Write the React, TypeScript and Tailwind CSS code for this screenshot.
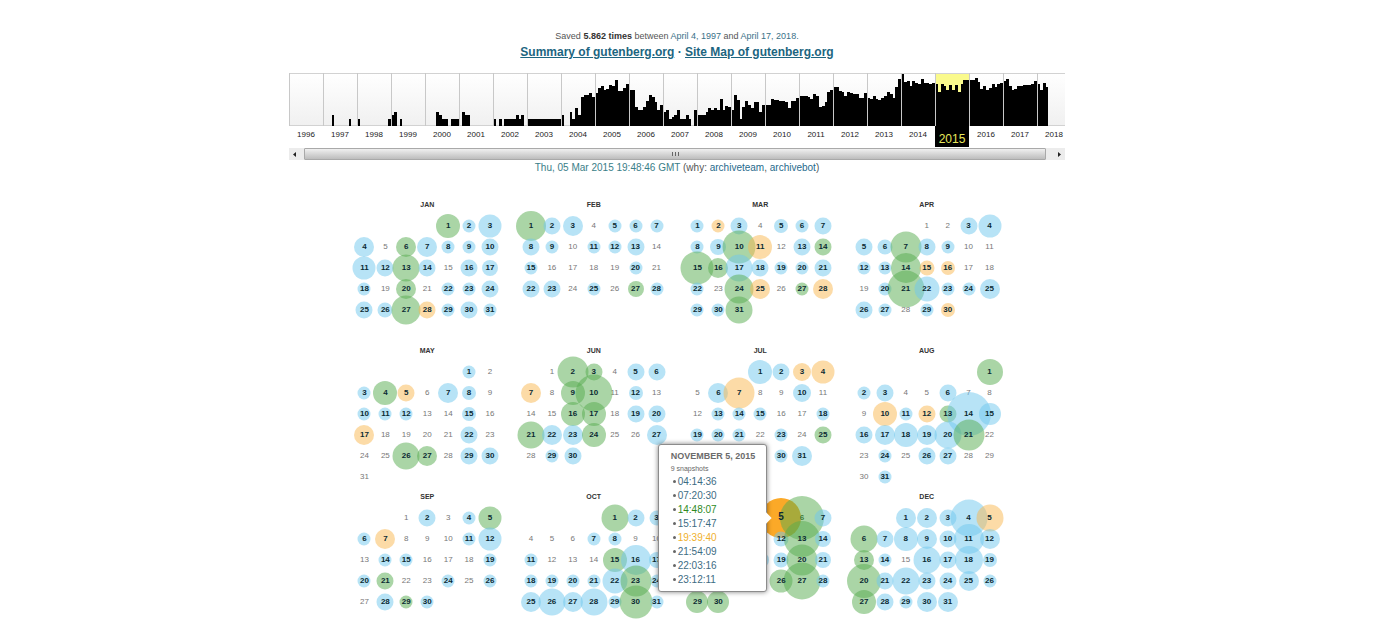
import React from "react";
import clsx from "clsx";

type Tone = "b" | "g" | "o";

interface MonthData {
  name: string;
  offset: number;
  length: number;
  // day, tone, diameter
  marks: string;
  // days that sit fully behind the open popup
  covered?: number[];
}

const FIRST_YEAR = 1996;
const SELECTED_YEAR = 2015;
const YEAR_WIDTH = 34;
const CHART_HEIGHT = 53;

// Monthly capture volume, one row per year
const VOLUME: number[][] = [
  [],
  [0, 0, 0, 11, 0, 0, 0, 0, 0, 7, 0, 0],
  [7, 0, 0, 0, 0, 0, 0, 0, 0, 0, 0, 7],
  [11, 14, 0, 7, 0, 0, 0, 0, 0, 0, 0, 0],
  [0, 0, 0, 0, 14, 11, 7, 7, 0, 7, 7, 7],
  [0, 14, 11, 11, 0, 0, 0, 0, 0, 0, 0, 0],
  [7, 0, 7, 0, 7, 7, 7, 7, 11, 7, 11, 0],
  [7, 7, 7, 7, 7, 7, 7, 7, 7, 7, 7, 7],
  [11, 0, 0, 14, 7, 18, 11, 29, 31, 31, 33, 29],
  [33, 38, 40, 36, 37, 41, 40, 46, 35, 35, 38, 42],
  [36, 36, 19, 16, 16, 19, 25, 31, 29, 24, 16, 21],
  [14, 16, 7, 9, 11, 16, 7, 7, 11, 7, 0, 16],
  [11, 11, 11, 14, 18, 16, 18, 16, 27, 16, 20, 19],
  [16, 31, 26, 7, 19, 25, 21, 18, 24, 24, 14, 21],
  [21, 21, 27, 26, 26, 25, 25, 24, 18, 25, 25, 28],
  [30, 30, 30, 29, 27, 32, 30, 19, 20, 24, 34, 36],
  [39, 39, 35, 34, 30, 34, 33, 32, 32, 28, 28, 33],
  [28, 27, 30, 27, 26, 28, 30, 34, 32, 28, 39, 47],
  [52, 44, 45, 40, 45, 43, 42, 47, 43, 43, 42, 43],
  [42, 34, 42, 40, 36, 41, 36, 41, 34, 42, 46, 46],
  [46, 46, 48, 44, 37, 40, 36, 38, 42, 39, 42, 43],
  [45, 47, 40, 36, 37, 40, 40, 41, 41, 41, 42, 45],
  [42, 36, 43, 39],
];

const MONTHS: MonthData[] = [
  {
    name: "JAN",
    offset: 4,
    length: 31,
    marks:
      "1g24 2b13 3b23 4b20 6g20 7b20 8b13 9b13 10b17 11b23 12b17 13g27 14b17 16b17 17b16 18b13 20g20 22b13 23b13 24b17 25b17 26b15 27g29 28o17 29b13 30b17 31b13",
  },
  {
    name: "FEB",
    offset: 0,
    length: 28,
    marks:
      "1g30 2b17 3b20 5b13 6b13 7b13 8b17 9b13 11b13 12b13 13b17 15b13 20b13 22b17 23b17 25b13 27g16 28b13",
  },
  {
    name: "MAR",
    offset: 0,
    length: 31,
    marks:
      "1b13 2o13 3b17 5b14 6b13 7b17 8b13 9b16 10g33 11o24 13b17 14g17 15g33 16g20 17b27 18b17 19b13 20b13 21b17 22b13 24g29 25o20 27g13 28o20 29b13 30b13 31g27",
  },
  {
    name: "APR",
    offset: 3,
    length: 30,
    marks:
      "3b17 4b23 5b17 6b15 7g31 8b17 9b13 12b13 13b13 14g30 15o15 16o14 20b13 21g37 22b25 23b13 24b13 25b20 26b17 27b13 29b13 30o14",
  },
  {
    name: "MAY",
    offset: 5,
    length: 31,
    marks:
      "1b13 3b13 4g24 5o17 7b20 8b14 10b13 11b13 12b13 15b14 17o20 22b17 26g27 27g20 29b17 30b17",
  },
  {
    name: "JUN",
    offset: 1,
    length: 30,
    marks:
      "2g31 3g17 5b17 6b17 7o20 9g24 10g37 12b14 16g24 17g24 19b17 20b17 21g27 22b20 23b20 24g24 27b20 29b13 30b17",
  },
  {
    name: "JUL",
    offset: 3,
    length: 31,
    marks:
      "1b24 2b17 3o18 4o23 6b20 7o31 10b18 13b13 14b13 15b13 18b13 19b13 20b13 21b13 23b13 25g17 30b13 31b20",
    covered: [26, 27, 28, 29],
  },
  {
    name: "AUG",
    offset: 6,
    length: 31,
    marks:
      "1g26 2b13 3b17 6b17 10o24 11b13 12o17 13g17 14b44 15b22 16b17 17b20 18b24 19b20 20b27 21g31 24b13 26b17 27b17 31b13",
  },
  {
    name: "SEP",
    offset: 2,
    length: 30,
    marks:
      "2b17 4b13 5g23 6b13 7o20 11b13 12b23 14b13 15b13 19b13 20b13 21g17 24b13 26b13 28b17 29g13 30b13",
  },
  {
    name: "OCT",
    offset: 4,
    length: 31,
    marks:
      "1g27 2b17 3b15 7b13 8b13 11b13 15g24 16b30 17b16 18b13 19b13 20b13 21b13 22b25 23g31 24b13 25b20 26b27 27b20 28b27 29b13 30g33 31b13",
  },
  {
    name: "NOV",
    offset: 0,
    length: 30,
    marks:
      "5o40 6g44 7b17 12b15 13g36 14b16 18b18 19b15 20g31 21b16 26g23 27g37 28b13 29g22 30g22",
    covered: [1, 2, 3, 4, 8, 9, 10, 11, 15, 16, 17, 22, 23, 24, 25],
  },
  {
    name: "DEC",
    offset: 2,
    length: 31,
    marks:
      "1b20 2b20 3b17 4b37 5o27 6g27 7b17 8b24 9b20 10b17 11b30 12b20 13g20 14b13 16b27 17b17 18b28 19b14 20g34 21b17 22b27 23b17 24b17 25b20 26b13 27g24 28b17 29b13 30b20 31b20",
  },
];

const SNAPSHOTS: { time: string; color: string }[] = [
  { time: "04:14:36", color: "text-[#3d6c83]" },
  { time: "07:20:30", color: "text-[#3d6c83]" },
  { time: "14:48:07", color: "text-[#2f8a1e]" },
  { time: "15:17:47", color: "text-[#3d6c83]" },
  { time: "19:39:40", color: "text-[#efb02e]" },
  { time: "21:54:09", color: "text-[#3d6c83]" },
  { time: "22:03:16", color: "text-[#3d6c83]" },
  { time: "23:12:11", color: "text-[#3d6c83]" },
];

const TONES: Record<Tone, string> = {
  b: "bg-[#70c7ed]/50",
  g: "bg-[#55ab4e]/50",
  o: "bg-[#f9b850]/50",
};

const parseMarks = (marks: string) => {
  const result = new Map<number, { tone: Tone; size: number }>();
  marks.split(" ").forEach((mark) => {
    const match = /^(\d+)([bgo])(\d+)$/.exec(mark);
    if (match) {
      result.set(Number(match[1]), {
        tone: match[2] as Tone,
        size: Number(match[3]),
      });
    }
  });
  return result;
};

const Header: React.FC = () => (
  <header className="text-center">
    <p className="text-[9px] leading-[12px] text-[#555]">
      Saved <b className="text-[#333]">5.862 times</b> between{" "}
      <a href="#first" className="text-[#3a7188]">
        April 4, 1997
      </a>{" "}
      and{" "}
      <a href="#last" className="text-[#3a7188]">
        April 17, 2018.
      </a>
    </p>
    <p className="mt-0.5 text-[12px] leading-[16px] font-bold text-[#1c6580]">
      <a href="#summary" className="underline">
        Summary of gutenberg.org
      </a>{" "}
      ·{" "}
      <a href="#sitemap" className="underline">
        Site Map of gutenberg.org
      </a>
    </p>
  </header>
);

const Sparkline: React.FC = () => {
  const width = VOLUME.length * YEAR_WIDTH;
  const barWidth = YEAR_WIDTH / 12;

  return (
    <svg
      width={width}
      height={CHART_HEIGHT}
      viewBox={`0 0 ${width} ${CHART_HEIGHT}`}
      className="block"
      role="img"
      aria-label="Captures per month"
    >
      <defs>
        <linearGradient id="chart-bg" x1="0" y1="0" x2="0" y2="1">
          <stop offset="0" stopColor="#ffffff" />
          <stop offset="1" stopColor="#f0f0f0" />
        </linearGradient>
      </defs>
      <rect width={width} height={CHART_HEIGHT} fill="url(#chart-bg)" />
      <rect
        x={(SELECTED_YEAR - FIRST_YEAR) * YEAR_WIDTH}
        width={YEAR_WIDTH}
        height={CHART_HEIGHT}
        fill="#fafa8c"
      />
      <path d={`M0 .5H${width}M0 52.5H${width}`} stroke="#d2d2d2" />
      {VOLUME.map((months, year) =>
        months.map((value, month) => (
          <rect
            key={`${year}-${month}`}
            x={year * YEAR_WIDTH + month * barWidth}
            y={CHART_HEIGHT - value}
            width={barWidth}
            height={value}
            fill="#000"
            shapeRendering="crispEdges"
          />
        )),
      )}
      {VOLUME.map((_, year) => (
        <path
          key={year}
          d={`M${year * YEAR_WIDTH + 0.5} 0V${CHART_HEIGHT}`}
          stroke="#c8c8c8"
        />
      ))}
    </svg>
  );
};

const Timeline: React.FC = () => (
  <section className="mt-[13px] overflow-hidden">
    <Sparkline />
    <div className="flex h-[22px] w-[782px]">
      {VOLUME.map((_, index) => {
        const year = FIRST_YEAR + index;
        const selected = year === SELECTED_YEAR;
        return (
          <button
            key={year}
            className={clsx(
              "flex-1 text-center",
              selected
                ? "h-[21px] bg-black pt-1 text-[12px] leading-[16px] text-[#e8e85c]"
                : "h-[18px] text-[8px] leading-[18px] text-[#222]",
            )}
          >
            {year}
          </button>
        );
      })}
    </div>
    <div className="flex h-3 bg-[#ececec]">
      <button
        aria-label="Scroll left"
        className="flex w-[15px] items-center justify-center pr-1"
      >
        <svg width="3" height="5" viewBox="0 0 3 5">
          <path d="M3 0v5L0 2.500z" fill="#222" />
        </svg>
      </button>
      <div className="flex flex-1 items-center justify-center rounded-[1px] border border-[#a9a9a9] bg-linear-to-b from-[#f0f0f0] to-[#bdbdbd]">
        <svg width="7" height="5" viewBox="0 0 7 5">
          <path d="M.5 0v4M3.500 0v4M6.500 0v4" stroke="#666" />
        </svg>
      </div>
      <button
        aria-label="Scroll right"
        className="flex w-[19px] items-center justify-center pl-2"
      >
        <svg width="3" height="5" viewBox="0 0 3 5">
          <path d="M0 0v5L3 2.500z" fill="#222" />
        </svg>
      </button>
    </div>
  </section>
);

const SnapshotPopup: React.FC = () => (
  <div className="absolute top-1/2 right-full z-20 mr-1 w-[109px] -translate-y-1/2 rounded-[3px] border border-[#8c8c8c] bg-white py-1 pl-3 text-left shadow-[0_0_5px_rgba(0,0,0,0.5)]">
    <div className="absolute top-1/2 -right-1 size-2 -translate-y-1/2 rotate-45 bg-white" />
    <h3 className="text-[9px] leading-[14px] font-bold whitespace-nowrap text-[#6b6b6b]">
      NOVEMBER 5, 2015
    </h3>
    <p className="text-[7px] leading-[12px] text-[#666]">9 snapshots</p>
    <ul>
      {SNAPSHOTS.map(({ time, color }) => (
        <li
          key={time}
          className="flex items-center gap-0.5 pl-0.5 text-[10px] leading-[14px]"
        >
          <span className="size-[3px] rounded-full bg-[#666]" />
          <a href={`#${time}`} className={color}>
            {time}
          </a>
        </li>
      ))}
    </ul>
  </div>
);

const Month: React.FC<{ month: MonthData }> = ({ month }) => {
  const marks = parseMarks(month.marks);
  const weekCount = Math.ceil((month.offset + month.length) / 7);
  const weeks = Array.from({ length: weekCount }, (_, week) =>
    Array.from({ length: 7 }, (_, day) => week * 7 + day - month.offset + 1),
  );

  return (
    <table className="w-full table-fixed border-collapse text-[8px] leading-[10px]">
      <caption
        className={clsx(
          "h-5 text-center text-[7px] leading-[20px] font-bold text-[#333]",
          month.name === "NOV" && "invisible",
        )}
      >
        {month.name}
      </caption>
      <tbody>
        {weeks.map((week, index) => (
          <tr key={index} className="h-[21px]">
            {week.map((day) => {
              if (
                day < 1 ||
                day > month.length ||
                month.covered?.includes(day)
              ) {
                return <td key={day} className="p-0" />;
              }
              const mark = marks.get(day);
              if (!mark) {
                return (
                  <td key={day} className="p-0 text-center text-[#777]">
                    {day}
                  </td>
                );
              }
              const active = month.name === "NOV" && day === 5;
              const faded = month.name === "NOV" && day === 6;
              return (
                <td key={day} className="relative p-0 text-center">
                  <span
                    className={clsx(
                      "absolute top-1/2 left-1/2 -translate-1/2 rounded-full",
                      active ? "bg-[#fba928]" : TONES[mark.tone],
                    )}
                    style={{ width: mark.size, height: mark.size }}
                  />
                  <a
                    href={`#${month.name}-${day}`}
                    className={clsx(
                      "font-bold",
                      faded ? "text-[#2c4a20]" : "relative z-10 text-[#0b2a33]",
                      active && "text-[10px]",
                    )}
                  >
                    {day}
                  </a>
                  {active && <SnapshotPopup />}
                </td>
              );
            })}
          </tr>
        ))}
      </tbody>
    </table>
  );
};

const App: React.FC = () => (
  <main className="bg-white pt-[30px] pr-[30px] pb-4 font-['Liberation_Sans',Arial,sans-serif]">
    <div className="mx-auto w-full max-w-[776px]">
      <Header />
      <Timeline />
      <p className="text-center text-[10px] leading-[16px] text-[#555]">
        <span className="text-[#3a7e88]">Thu, 05 Mar 2015 19:48:46 GMT</span>{" "}
        (why:{" "}
        <a href="#archiveteam" className="text-[#1f6a8c]">
          archiveteam
        </a>
        ,{" "}
        <a href="#archivebot" className="text-[#1f6a8c]">
          archivebot
        </a>
        )
      </p>
    </div>
    <div className="mx-auto mt-[19px] grid w-full max-w-[646px] grid-cols-4 grid-rows-[146px_146px_auto] items-start gap-x-5">
      {MONTHS.map((month) => (
        <Month key={month.name} month={month} />
      ))}
    </div>
  </main>
);

export default App;
